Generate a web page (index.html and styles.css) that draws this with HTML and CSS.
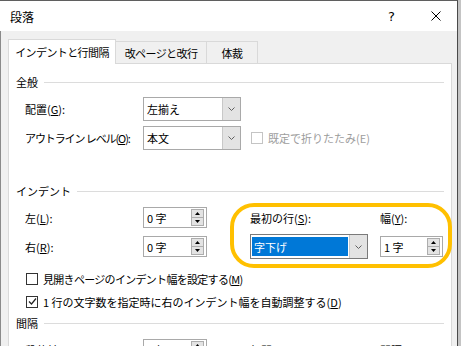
FILE: index.html
```html
<!DOCTYPE html>
<html lang="ja">
<head>
  <meta charset="UTF-8" />
  <title>段落</title>
  <link rel="stylesheet" href="styles.css">
</head>
<body>
  <div class="screen">
    <div class="window">
      <div class="titlebar">
        <span class="title">段落</span>
        <span class="help">?</span>
        <svg class="close" width="10" height="10" viewBox="0 0 10 10"><path d="M0.5 0.5L9.5 9.5M9.5 0.5L0.5 9.5" stroke="#000" stroke-width="1" fill="none"/></svg>
      </div>
      <div class="body">
        <div class="tabs">
          <div class="tab active tab-1">インデントと行間隔</div>
          <div class="tab tab-2">改ページと改行</div>
          <div class="tab tab-3">体裁</div>
        </div>
        <div class="panel">
          <div class="group-head head-general"><span>全般</span><i></i></div>
          <div class="form-row row-align">
            <span class="label">配置(<u>G</u>):</span>
            <div class="combo"><span class="combo-text">左揃え</span><span class="combo-btn"><svg width="7" height="4" viewBox="0 0 7 4"><path d="M0.5 0.5L3.5 3.5L6.5 0.5" stroke="#606060" fill="none"/></svg></span></div>
          </div>
          <div class="form-row row-outline">
            <span class="label tighter">アウトライン レベル(<u>O</u>):</span>
            <div class="combo"><span class="combo-text">本文</span><span class="combo-btn"><svg width="7" height="4" viewBox="0 0 7 4"><path d="M0.5 0.5L3.5 3.5L6.5 0.5" stroke="#606060" fill="none"/></svg></span></div>
            <div class="check disabled"><span class="box"></span>既定で折りたたみ(E)</div>
          </div>

          <div class="group-head head-indent"><span>インデント</span><i></i></div>
          <div class="indent-grid">
            <span class="label">左(<u>L</u>):</span>
            <div class="spin"><span class="spin-text">0 字</span><span class="spin-btns"><b><svg width="5" height="3" viewBox="0 0 5 3"><path d="M0 3L2.5 0L5 3Z"/></svg></b><b><svg width="5" height="3" viewBox="0 0 5 3"><path d="M0 0L2.5 3L5 0Z"/></svg></b></span></div>
            <span></span>
            <span class="label">最初の行(<u>S</u>):</span>
            <span></span>
            <span class="label">幅(<u>Y</u>):</span>

            <span class="label">右(<u>R</u>):</span>
            <div class="spin"><span class="spin-text">0 字</span><span class="spin-btns"><b><svg width="5" height="3" viewBox="0 0 5 3"><path d="M0 3L2.5 0L5 3Z"/></svg></b><b><svg width="5" height="3" viewBox="0 0 5 3"><path d="M0 0L2.5 3L5 0Z"/></svg></b></span></div>
            <span></span>
            <div class="combo combo-first"><span class="combo-text"><em>字下げ</em></span><span class="combo-btn"><svg width="7" height="4" viewBox="0 0 7 4"><path d="M0.5 0.5L3.5 3.5L6.5 0.5" stroke="#606060" fill="none"/></svg></span></div>
            <span></span>
            <div class="spin"><span class="spin-text">1 字</span><span class="spin-btns"><b><svg width="5" height="3" viewBox="0 0 5 3"><path d="M0 3L2.5 0L5 3Z"/></svg></b><b><svg width="5" height="3" viewBox="0 0 5 3"><path d="M0 0L2.5 3L5 0Z"/></svg></b></span></div>
          </div>
          <div class="check-row first-check tight"><span class="box"></span>見開きページのインデント幅を設定する(<u>M</u>)</div>
          <div class="check-row"><span class="box checked"><svg width="9" height="9" viewBox="0 0 9 9"><path d="M1 4.5L3.5 7L8 1.5" stroke="#222" stroke-width="1.2" fill="none"/></svg></span>1 行の文字数を指定時に右のインデント幅を自動調整する(<u>D</u>)</div>

          <div class="group-head head-spacing"><span>間隔</span><i></i></div>
          <div class="indent-grid spacing-grid">
            <span class="label">段落前(<u>B</u>):</span>
            <div class="spin"><span class="spin-text">0 行</span><span class="spin-btns"><b><svg width="5" height="3" viewBox="0 0 5 3"><path d="M0 3L2.5 0L5 3Z"/></svg></b><b><svg width="5" height="3" viewBox="0 0 5 3"><path d="M0 0L2.5 3L5 0Z"/></svg></b></span></div>
            <span></span>
            <span class="label">行間(<u>N</u>):</span>
            <span></span>
            <span class="label">間隔(<u>A</u>):</span>
          </div>

          <div class="highlight"></div>
        </div>
      </div>
    </div>
    <div class="behind"></div>
  </div>
</body>
</html>
```

FILE: styles.css
```css
body {
  margin: 0;
  font-family: "Noto Sans CJK JP", "DejaVu Sans", sans-serif;
  font-size: 11px;
  color: #000;
  background: #fff;
}
.screen {
  display: flex;
  width: 461px;
  height: 346px;
  overflow: hidden;
}
.window {
  width: 458px;
  box-sizing: border-box;
  border-top: 1px solid #5f5f5f;
  border-right: 1px solid #4a4a4a;
  display: flex;
  flex-direction: column;
}
.behind {
  flex: 1;
  background: #c4c4c4;
}
.titlebar {
  height: 30px;
  background: #fff;
  display: flex;
  align-items: center;
  padding: 0 16px 0 10px;
  flex-shrink: 0;
}
.title {
  flex: 1;
  font-size: 12px;
}
.help {
  font-family: "DejaVu Sans", sans-serif;
  font-size: 13px;
  margin-right: 36px;
}
.body {
  flex: 1;
  background: #f0f0f0;
  border-left: 1px solid #8a8a8a;
  padding: 7px 5px 0 7px;
}
.tabs {
  display: flex;
  align-items: flex-end;
  height: 25px;
}
.tab {
  box-sizing: border-box;
  height: 22px;
  border: 1px solid #d9d9d9;
  border-bottom: none;
  border-left: none;
  background: #f0f0f0;
  display: flex;
  align-items: center;
  justify-content: center;
  white-space: nowrap;
  letter-spacing: -0.6px;
  padding-top: 1px;
}
.tab.active {
  height: 25px;
  background: #fff;
  border-left: 1px solid #d9d9d9;
  margin-bottom: -1px;
  position: relative;
  z-index: 1;
  padding-top: 0;
  padding-bottom: 1px;
}
.tab-1 { width: 108px; }
.tab-2 { width: 91px; }
.tab-3 { width: 51px; }
.panel {
  position: relative;
  background: #fff;
  border: 1px solid #d9d9d9;
  height: 300px;
  padding: 0 7px;
}
.group-head {
  display: flex;
  align-items: center;
  height: 16px;
}
.group-head i {
  flex: 1;
  height: 1px;
  background: #dcdcdc;
  margin-left: 6px;
}
.head-general { margin-top: 10px; }
.head-indent { margin-top: 33px; }
.head-spacing { margin-top: 2px; }
.form-row {
  display: grid;
  grid-template-columns: 118px 98px auto;
  align-items: center;
  height: 24px;
  padding-left: 9px;
}
.row-align { margin-top: 7px; }
.row-outline { margin-top: 5px; }
.label {
  white-space: nowrap;
}
.tight {
  letter-spacing: -0.7px;
}
.tighter {
  letter-spacing: -1.1px;
}
.combo {
  box-sizing: border-box;
  height: 24px;
  border: 1px solid #a9a9a9;
  background: #fff;
  display: flex;
}
.combo-text {
  flex: 1;
  display: flex;
  align-items: center;
  padding-left: 3px;
}
.combo-btn {
  width: 17px;
  background: #e3e3e3;
  border-left: 1px solid #c8c8c8;
  display: flex;
  align-items: center;
  justify-content: center;
}
.combo-first {
  height: 25px;
  margin: -2px 0;
  border-color: #7a7a7a;
}
.combo-first .combo-text {
  padding: 2px 1px 2px 1px;
}
.combo-first em {
  font-style: normal;
  background: #0078d7;
  color: #fff;
  display: flex;
  align-items: center;
  height: 100%;
  width: 100%;
  padding-left: 2px;
}
.check {
  display: flex;
  align-items: center;
  margin-left: 10px;
  color: #9d9d9d;
}
.box {
  box-sizing: border-box;
  width: 12px;
  height: 12px;
  border: 1px solid #333;
  background: #fff;
  margin-right: 5px;
  display: flex;
  align-items: center;
  justify-content: center;
}
.check.disabled .box {
  border-color: #c4c4c4;
}
.indent-grid {
  display: grid;
  grid-template-columns: 118px 64px 43px 118px 12px 63px;
  grid-template-rows: 21px 21px;
  row-gap: 8px;
  align-items: center;
  padding-left: 9px;
  margin-top: 8px;
}
.spacing-grid {
  grid-template-rows: 21px;
}
.spin {
  box-sizing: border-box;
  height: 21px;
  border: 1px solid #a9a9a9;
  background: #fff;
  display: flex;
}
.spin-text {
  flex: 1;
  display: flex;
  align-items: center;
  padding-left: 3px;
}
.spin-btns {
  display: flex;
  flex-direction: column;
  width: 13px;
  margin: 1px 2px 1px 0;
}
.spin-btns b {
  flex: 1;
  box-sizing: border-box;
  background: #e3e3e3;
  border: 1px solid #adadad;
  display: flex;
  align-items: center;
  justify-content: center;
}
.spin-btns b + b {
  margin-top: -1px;
}
.check-row {
  display: flex;
  align-items: center;
  height: 23px;
  padding-left: 10px;
}
.first-check {
  margin-top: 10px;
}
.highlight {
  position: absolute;
  left: 221px;
  top: 139px;
  width: 222px;
  height: 65px;
  box-sizing: border-box;
  border: 4px solid #ffc000;
  border-radius: 24px;
  pointer-events: none;
}
```
